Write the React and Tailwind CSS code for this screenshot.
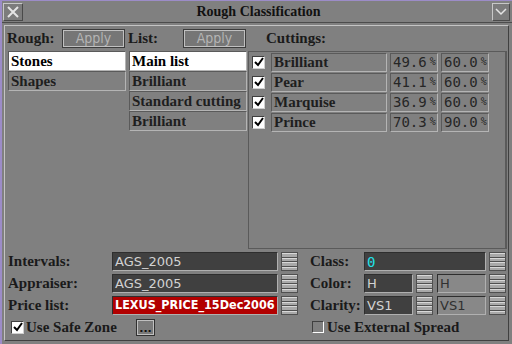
import React from 'react';

const serif = { fontFamily: '"Liberation Serif", "Times New Roman", serif' };
const sans = { fontFamily: '"DejaVu Sans", sans-serif' };
const sansCond = { fontFamily: '"DejaVu Sans Condensed", "DejaVu Sans", sans-serif' };
const mono = { fontFamily: '"DejaVu Sans Mono", monospace' };

const CUTTINGS = [
  { name: 'Brilliant', a: '49.6', b: '60.0' },
  { name: 'Pear', a: '41.1', b: '60.0' },
  { name: 'Marquise', a: '36.9', b: '60.0' },
  { name: 'Prince', a: '70.3', b: '90.0' },
];

function Spinner() {
  return (
    <div className="ml-[3px] w-[17px] h-[19px] flex flex-col border border-[#505050] bg-[#505050] gap-px">
      {[0, 1, 2, 3].map(i => (
        <div key={i} className="flex-1 bg-[#a9a9a9] border-t border-[#d8d8d8]" />
      ))}
    </div>
  );
}

function Check({ on, cls = '' }) {
  return (
    <div className={`w-[13px] h-[13px] bg-white border-t border-l border-[#404040] border-b border-r border-b-[#d0d0d0] border-r-[#d0d0d0] flex items-center justify-center ${cls}`}>
      {on && (
        <svg width="10" height="10" viewBox="0 0 10 10">
          <path d="M1 5 L4 8 L9 1" stroke="#000" strokeWidth="2" fill="none" />
        </svg>
      )}
    </div>
  );
}

function ApplyBtn() {
  return (
    <div className="w-[63px] h-[19px] border border-[#3c3c3c] bg-[#c0c0c0] p-px">
      <div className="w-full h-full bg-[#767676] flex items-center justify-center text-[#b4b4b4] text-[14px] leading-none" style={sansCond}>Apply</div>
    </div>
  );
}

function ListItem({ text, selected }) {
  return (
    <div className={`h-[20px] flex items-center px-[2px] text-[15px] font-bold leading-none border-t border-l border-[#5a5a5a] border-b border-r border-b-[#b4b4b4] border-r-[#b4b4b4] ${selected ? 'bg-white text-black' : 'bg-[#808080] text-[#1e1e1e]'}`} style={serif}>
      <span className="whitespace-nowrap overflow-hidden">{text}</span>
    </div>
  );
}

function Cell({ children, w, font, cls = '' }) {
  return (
    <div className={`h-[19px] flex items-center px-[2px] leading-none border-t border-l border-[#5a5a5a] border-b border-r border-b-[#b4b4b4] border-r-[#b4b4b4] ${w} ${cls}`} style={font}>
      {children}
    </div>
  );
}

function Field({ children, w, cls, font = sans }) {
  return (
    <div className={`h-[19px] flex items-center px-[2px] leading-none overflow-hidden whitespace-nowrap border-t border-l border-[#2e2e2e] border-b border-r border-b-[#b0b0b0] border-r-[#b0b0b0] ${w} ${cls}`} style={font}>
      {children}
    </div>
  );
}

function Label({ children, cls = '' }) {
  return <span className={`text-[15px] font-bold leading-none text-[#1a1a1a] whitespace-nowrap shrink-0 ${cls}`} style={serif}>{children}</span>;
}

export default function App() {
  return (
    <div className="w-[512px] h-[344px] bg-[#808080] overflow-hidden border-l-2 border-t border-[#9c8cc8] flex flex-col text-[#1a1a1a]">
      {/* Title bar */}
      <div className="h-[22px] flex items-center justify-between pl-[1px] pr-[2px] border-b border-[#4c4c4c]">
        <div className="w-[20px] h-[18px] border-t border-l border-[#c8c8c8] border-b border-r border-b-[#4a4a4a] border-r-[#4a4a4a] bg-[#7c7c7c] flex items-center justify-center">
          <svg width="12" height="12" viewBox="0 0 12 12">
            <path d="M1 1 L11 11 M11 1 L1 11" stroke="#e4e4e4" strokeWidth="2" />
          </svg>
        </div>
        <div className="text-[14px] font-bold leading-none text-[#111] ml-[2px]" style={serif}>Rough Classification</div>
        <div className="w-[18px] h-[18px] border-t border-l border-[#c8c8c8] border-b border-r border-b-[#4a4a4a] border-r-[#4a4a4a] bg-[#7c7c7c] flex items-center justify-center">
          <svg width="12" height="8" viewBox="0 0 12 8">
            <path d="M1 1 L6 6 L11 1" stroke="#e4e4e4" strokeWidth="1.5" fill="none" />
          </svg>
        </div>
      </div>

      {/* Main panel */}
      <div className="ml-[2px] mr-[3px] mt-[2px] mb-[3px] flex-1 flex flex-col border border-[#c4c4c4] border-r-[#404040] border-b-[#404040]">
        {/* Top region */}
        <div className="h-[223px] flex">
          <div className="w-[243px] flex flex-col pl-[2px]">
            <div className="h-[24px] flex items-center">
              <Label cls="w-[55px]">Rough:</Label>
              <ApplyBtn />
              <Label cls="w-[55px] ml-[3px]">List:</Label>
              <ApplyBtn />
            </div>
            <div className="flex gap-[3px] mt-px pl-px">
              <div className="w-[118px] flex flex-col">
                <ListItem text="Stones" selected />
                <ListItem text="Shapes" />
              </div>
              <div className="w-[118px] flex flex-col">
                <ListItem text="Main list" selected />
                <ListItem text="Brilliant" />
                <ListItem text="Standard cutting" />
                <ListItem text="Brilliant" />
              </div>
            </div>
          </div>
          <div className="flex-1 flex flex-col">
            <div className="h-[24px] flex items-center pl-[18px]"><Label>Cuttings:</Label></div>
            <div className="flex-1 mt-px mr-[1px] border-l border-t border-[#5a5a5a] border-r-2 border-r-[#5a5a5a] border-b border-b-[#5a5a5a] flex flex-col">
              {CUTTINGS.map(c => (
                <div key={c.name} className="h-[20px] flex items-center pl-[3px]">
                  <Check on />
                  <div className="ml-[6px] flex gap-[3px]">
                    <Cell w="w-[116px]" font={serif} cls="text-[15px] font-bold text-[#1e1e1e]">{c.name}</Cell>
                    <Cell w="w-[48px]" font={mono} cls="text-[14px] text-[#262626]">{c.a}<span className="text-[10px] ml-[3px]">%</span></Cell>
                    <Cell w="w-[48px]" font={mono} cls="text-[14px] text-[#262626]">{c.b}<span className="text-[10px] ml-[3px]">%</span></Cell>
                  </div>
                </div>
              ))}
            </div>
          </div>
        </div>

        {/* Bottom region */}
        <div className="flex flex-col pl-[3px] pt-[3px] gap-[3px]">
          <div className="flex items-center h-[19px]">
            <Label cls="w-[104px]">Intervals:</Label>
            <Field w="w-[166px]" cls="bg-[#404040] text-[#d2d2d2] text-[13px]">AGS_2005</Field>
            <Spinner />
            <Label cls="w-[54px] ml-[12px]">Class:</Label>
            <Field w="w-[122px]" cls="bg-[#404040] text-[#22e0e8] text-[14px]" font={mono}>0</Field>
            <Spinner />
          </div>
          <div className="flex items-center h-[19px]">
            <Label cls="w-[104px]">Appraiser:</Label>
            <Field w="w-[166px]" cls="bg-[#404040] text-[#d2d2d2] text-[13px]">AGS_2005</Field>
            <Spinner />
            <Label cls="w-[54px] ml-[12px]">Color:</Label>
            <Field w="w-[49px]" cls="bg-[#404040] text-[#d2d2d2] text-[13px]">H</Field>
            <Spinner />
            <Field w="w-[49px] ml-[4px]" cls="bg-[#888888] text-[#303030] text-[13px]">H</Field>
            <Spinner />
          </div>
          <div className="flex items-center h-[19px]">
            <Label cls="w-[104px]">Price list:</Label>
            <Field w="w-[166px]" cls="bg-[#b20000] text-white text-[12.5px] font-bold" font={sansCond}>LEXUS_PRICE_15Dec2006</Field>
            <Spinner />
            <Label cls="w-[54px] ml-[12px]">Clarity:</Label>
            <Field w="w-[49px]" cls="bg-[#404040] text-[#d2d2d2] text-[13px]">VS1</Field>
            <Spinner />
            <Field w="w-[49px] ml-[4px]" cls="bg-[#888888] text-[#303030] text-[13px]">VS1</Field>
            <Spinner />
          </div>
          <div className="flex items-center h-[18px]">
            <Check on cls="ml-[3px]" />
            <Label cls="w-[110px] ml-[2px]">Use Safe Zone</Label>
            <div className="w-[19px] h-[17px] border border-[#303030] bg-[#c0c0c0] p-px">
              <div className="w-full h-full bg-[#7a7a7a] flex items-end justify-center text-[11px] leading-[11px] font-bold text-[#111]" style={sans}>...</div>
            </div>
            <div className="ml-[157px] w-[12px] h-[12px] border border-t-[#404040] border-l-[#404040] border-b-white border-r-white bg-[#808080]" />
            <Label cls="ml-[3px]">Use External Spread</Label>
          </div>
        </div>
      </div>
    </div>
  );
}
